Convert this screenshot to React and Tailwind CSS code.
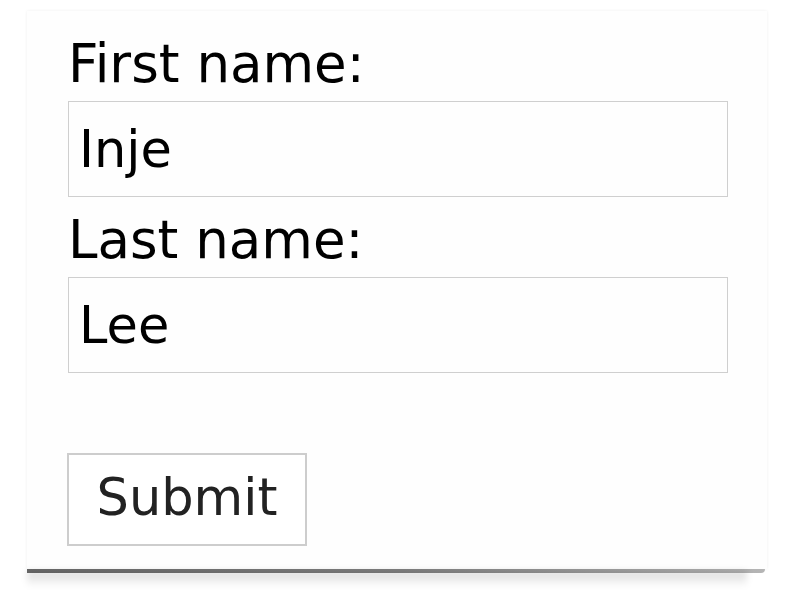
export default function App() {
  return (
    <div className="min-h-[606px] w-[793px] bg-white pl-[27px] pt-[11px]" style={{ fontFamily: '"DejaVu Sans", Verdana, sans-serif' }}>
      <div className="relative h-[558px] w-[740px] bg-[#fefefe] shadow-[0_0_3px_rgba(0,0,0,0.07)]">
        {/* curled bottom shadow */}
        <div className="absolute bottom-[-4px] left-0 h-[4px] w-[738px] rounded-br-full bg-gradient-to-r from-[#6a6a6a] via-[#808080] to-[#b5b5b5] blur-[0.7px]" />
        <div className="absolute bottom-[-18px] left-0 h-[16px] w-[720px] bg-gradient-to-b from-black/15 to-transparent blur-[3px]" />

        <form className="relative flex flex-col items-start pl-[41px] pt-[23px]">
          <label className="text-[53px] leading-[60px] text-black">First name:</label>
          <input
            readOnly
            defaultValue="Inje"
            className="mt-[7px] h-[96px] w-[660px] border border-[#cfcfcf] bg-[#fefefe] px-[10px] text-[51px] text-black outline-none"
          />
          <label className="mt-[13px] text-[53px] leading-[60px] text-black">Last name:</label>
          <input
            readOnly
            defaultValue="Lee"
            className="mt-[7px] h-[96px] w-[660px] border border-[#cfcfcf] bg-[#fefefe] px-[10px] text-[51px] text-black outline-none"
          />
          <button
            type="button"
            className="ml-[-1px] mt-[80px] flex h-[93px] w-[240px] items-center justify-center border-2 border-[#cdcdcd] bg-white pb-[2px] text-[51px] text-[#222]"
          >
            Submit
          </button>
        </form>
      </div>
    </div>
  )
}
